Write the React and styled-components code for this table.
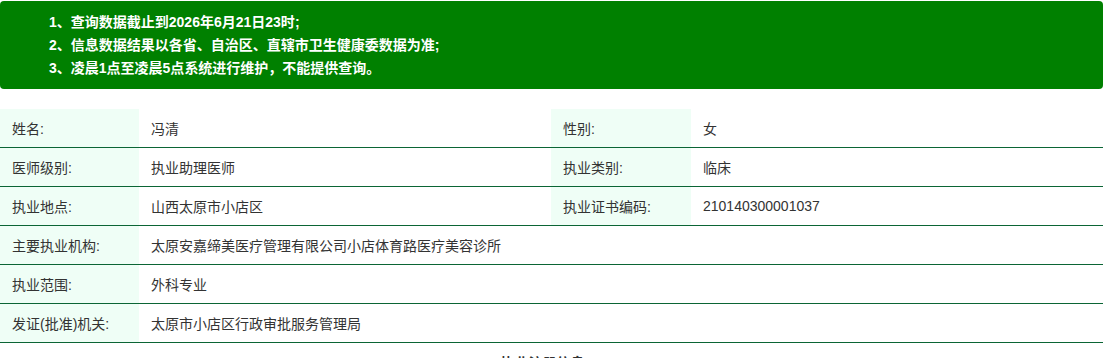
import React from "react";
import styled, { createGlobalStyle } from "styled-components";

const GlobalStyle = createGlobalStyle`
  body {
    margin: 0;
    background: #fff;
    font-family: "Liberation Sans", "Noto Sans CJK SC", sans-serif;
    font-size: 14px;
    color: #333;
  }
`;

const Page = styled.div`
  width: 1103px;
  padding-top: 1px;
`;

const Notice = styled.div`
  background-color: #008000;
  border-radius: 4px;
  height: 88px;
  box-sizing: border-box;
  padding: 10px 0 0 49px;
  color: #fff;
  font-size: 14px;
  line-height: 23px;
`;

const NoticeLine = styled.p`
  margin: 0;
  font-weight: 600;

  strong {
    font-weight: 700;
  }
`;

const Table = styled.div`
  margin-top: 20px;
`;

const Row = styled.div`
  display: grid;
  grid-template-columns: ${(p) => (p.$full ? "139px 1fr" : "139px 412px 140px 1fr")};
  border-bottom: 1px solid #0b6535;
  height: 38px;
`;

const Label = styled.div`
  background-color: #effef6;
  display: flex;
  align-items: center;
  padding-left: 12px;
  color: #333;
`;

const Value = styled.div`
  display: flex;
  align-items: center;
  padding-left: 12px;
  color: #333;
`;

const SectionTitle = styled.div`
  text-align: center;
  font-size: 14px;
  font-weight: 700;
  color: #333;
  margin-top: 9px;
  padding-right: 18px;
`;

const pairs = [
  ["姓名:", "冯清", "性别:", "女"],
  ["医师级别:", "执业助理医师", "执业类别:", "临床"],
  ["执业地点:", "山西太原市小店区", "执业证书编码:", "210140300001037"],
];

const singles = [
  ["主要执业机构:", "太原安嘉缔美医疗管理有限公司小店体育路医疗美容诊所"],
  ["执业范围:", "外科专业"],
  ["发证(批准)机关:", "太原市小店区行政审批服务管理局"],
];

export default function App() {
  return (
    <Page>
      <GlobalStyle />
      <Notice>
        <NoticeLine>
          1、查询数据截止到<strong>2026年6月21日23时</strong>;
        </NoticeLine>
        <NoticeLine>2、信息数据结果以各省、自治区、直辖市卫生健康委数据为准;</NoticeLine>
        <NoticeLine>
          3、<strong>凌晨1点至凌晨5点</strong>系统进行维护，不能提供查询。
        </NoticeLine>
      </Notice>
      <Table>
        {pairs.map(([l1, v1, l2, v2]) => (
          <Row key={l1}>
            <Label>{l1}</Label>
            <Value>{v1}</Value>
            <Label>{l2}</Label>
            <Value>{v2}</Value>
          </Row>
        ))}
        {singles.map(([l, v]) => (
          <Row key={l} $full>
            <Label>{l}</Label>
            <Value>{v}</Value>
          </Row>
        ))}
      </Table>
      <SectionTitle>执业注册信息</SectionTitle>
    </Page>
  );
}
